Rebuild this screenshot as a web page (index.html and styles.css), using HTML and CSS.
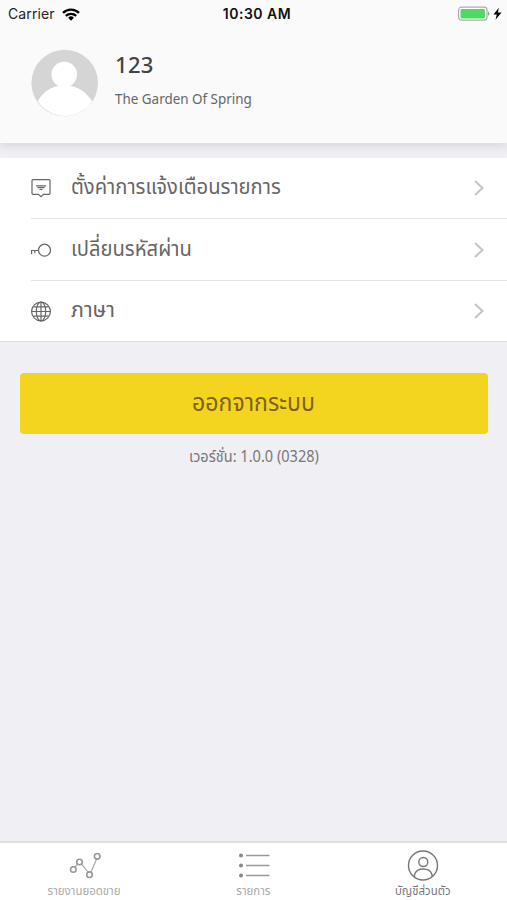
FILE: index.html
```
<!DOCTYPE html>
<html lang="th">
<head>
<meta charset="utf-8">
<title>บัญชีส่วนตัว</title>
<link rel="stylesheet" href="styles.css">
</head>
<body>
<div class="screen">
  <header class="header">
    <div class="status">
      <div class="carrier"><span>Carrier</span>
        <svg width="18" height="13" viewBox="0 0 18 13"><g fill="none" stroke="#000" stroke-width="2.3"><path d="M1 4.8a11.5 11.5 0 0 1 16 0"/><path d="M3.8 7.9a7.5 7.5 0 0 1 10.4 0"/></g><path d="M9 12.7l-2.9-3a4.2 4.2 0 0 1 5.800 0z"/></svg>
      </div>
      <div class="time">10:30 AM</div>
      <div class="power">
        <svg width="45" height="16" viewBox="0 0 45 16"><rect x=".6" y="1.200" width="28.400" height="13" rx="3" fill="#fff" stroke="#aaa" stroke-width="1.200"/><rect x="2.500" y="3" width="24.400" height="9.400" rx="1" fill="#4cd964"/><path d="M30 5.500q2.800 2.200 0 4.400z" fill="#999"/><path d="M40.800 1.800L35.500 8.500h3.300L37.500 13.800l6-7.300h-3.600z"/></svg>
      </div>
    </div>
    <div class="profile">
      <svg class="avatar" width="68" height="68" viewBox="0 0 68 68"><defs><clipPath id="face"><circle cx="34" cy="34" r="33"/></clipPath></defs><circle cx="33.700" cy="34" r="33.300" fill="#d5d5d5"/><g clip-path="url(#face)" fill="#fff"><circle cx="33.300" cy="25.500" r="12.800"/><path d="M27.500 34h11.500v6H27.500z"/><path d="M4 58C10 42 22 36.500 33.500 36.500S57 42 64 58V70H4z"/></g></svg>
      <div>
        <div class="name">123</div>
        <div class="shop"><span class="fit">The Garden Of Spring</span></div>
      </div>
    </div>
  </header>
  <main class="content">
    <nav class="menu">
      <a class="row">
        <svg class="icon" width="20" height="22" viewBox="0 0 20 22"><path d="M2 2.600h16a1 1 0 0 1 1 1v12.700a1 1 0 0 1-1 1h-5.500L10 19.600l-2.500-2.300H2a1 1 0 0 1-1-1V3.600a1 1 0 0 1 1-1zM5 8.800h10M6.500 10.700h7M8.500 12.500h3"/></svg>
        <span class="label"><span class="fit notify">ตั้งค่าการแจ้งเตือนรายการ</span></span>
        <svg class="chevron" width="12" height="18" viewBox="0 0 12 18"><path d="M2 2l7.500 7L2 16"/></svg>
      </a>
      <a class="row">
        <svg class="icon" width="20" height="22" viewBox="0 0 20 22"><circle cx="13.500" cy="11.200" r="6"/><path d="M7.500 11.500H.6v3.800M3.800 11.500v2.800"/></svg>
        <span class="label"><span class="fit password">เปลี่ยนรหัสผ่าน</span></span>
        <svg class="chevron" width="12" height="18" viewBox="0 0 12 18"><path d="M2 2l7.500 7L2 16"/></svg>
      </a>
      <a class="row">
        <svg class="icon" width="20" height="22" viewBox="0 0 20 22"><circle cx="10" cy="11.500" r="9.400"/><ellipse cx="10" cy="11.500" rx="4.700" ry="9.400"/><path d="M10 2.100v18.800M.6 11.500h18.800M2.300 6.800h15.400M2.300 16.200h15.400"/></svg>
        <span class="label"><span class="fit language">ภาษา</span></span>
        <svg class="chevron" width="12" height="18" viewBox="0 0 12 18"><path d="M2 2l7.500 7L2 16"/></svg>
      </a>
    </nav>
    <button class="logout"><span class="fit">ออกจากระบบ</span></button>
    <p class="version"><span class="fit">เวอร์ชั่น: 1.0.0 (0328)</span></p>
  </main>
  <footer class="tabs">
    <a class="tab">
      <svg width="34" height="30" viewBox="0 0 34 30"><g fill="none" stroke="#aaa" stroke-width="1.200"><path d="M6.800 16.500l3-3.500M13.500 12.800l6.800 8.700M23 21l6-13.800"/><g stroke="#999" stroke-width="1.600"><circle cx="5.300" cy="18.500" r="2.800"/><circle cx="11.500" cy="11" r="2.800"/><circle cx="21.500" cy="23.700" r="2.800"/><circle cx="29.200" cy="5.300" r="2.800"/></g></g></svg>
      <span class="caption"><span class="fit sales">รายงานยอดขาย</span></span>
    </a>
    <a class="tab">
      <svg width="34" height="30" viewBox="0 0 34 30"><g stroke="#999" stroke-width="1.600"><path d="M9 4.500H32.500M9 14.500H32.500M9 24.500H32.500"/></g><g fill="#888"><circle cx="4" cy="4.500" r="2"/><circle cx="4" cy="14.500" r="2"/><circle cx="4" cy="24.500" r="2"/></g></svg>
      <span class="caption"><span class="fit list">รายการ</span></span>
    </a>
    <a class="tab active">
      <svg width="34" height="30" viewBox="0 0 34 30"><g fill="none" stroke="#777" stroke-width="1.400"><circle cx="17" cy="14.500" r="14.500"/><circle cx="17.300" cy="11" r="4.500"/><path d="M8.500 26v-2.500C10 19.500 13.500 18 17.300 18s7.500 1.500 8.700 5.500V26"/></g></svg>
      <span class="caption"><span class="fit account">บัญชีส่วนตัว</span></span>
    </a>
  </footer>
</div>
</body>
</html>
```
FILE: styles.css
```
* { box-sizing: border-box; }
body { margin: 0; font-family: "Noto Sans Thai", "Open Sans", "Noto Sans", sans-serif; }
.screen { width: 507px; height: 900px; display: flex; flex-direction: column; background: #efeff4; overflow: hidden; }
.header { height: 143px; background: #fafafa; box-shadow: 0 3px 9px rgba(0,0,0,.1); }
.status { height: 28px; padding: 0 4px 0 8px; display: grid; grid-template-columns: 1fr auto 1fr; align-items: center; font: 14px/28px Inter, sans-serif; color: #222; letter-spacing: .1px; }
.carrier { display: flex; align-items: center; gap: 7px; }
.time { font-weight: 600; color: #111; font-size: 14px; letter-spacing: .5px; padding-left: 3px; }
.power { display: flex; justify-content: flex-end; }
.profile { display: flex; padding: 21px 0 0 31px; gap: 16px; }
.name { font: 500 22px/32px "Noto Sans", sans-serif; color: #444; letter-spacing: .3px; transform: translateY(-1px); }
.shop { font: 15px/34px "Noto Sans", sans-serif; color: #666; }
.shop .fit { transform: scaleX(.895); }
.fit { display: inline-block; white-space: nowrap; transform-origin: left center; }
.menu { margin-top: 15px; background: #fff; border-bottom: 1px solid #dedee2; padding-left: 31px; }
.row { height: 61px; display: flex; align-items: center; padding-right: 22px; border-bottom: 1px solid #e4e4e6; }
.row:nth-child(2) { height: 62px; }
.row:last-child { height: 60px; border-bottom: 0; }
.icon { fill: none; stroke: #666; stroke-width: 1.2; flex: none; }
.label { flex: 1; margin-left: 20px; font-size: 20px; line-height: 40px; color: #666; }
.label .fit { transform: translateY(-1px) scale(1.01, 1.1); }
.label .language { transform: translateY(-1px) scale(1.07, 1.1); }
.chevron { fill: none; stroke: #c5c5c8; stroke-width: 2; }
.content { flex: 1; }
.logout { display: block; width: 468px; height: 61px; margin: 31px 0 0 20px; padding: 0; border: 0; border-radius: 4px; background: #f3d520; color: #80611c; font: 400 22px/40px "Noto Sans Thai", "Open Sans", sans-serif; }
.version { margin: 9px 0 0; text-align: center; font-size: 15px; line-height: 30px; color: #777; }
.version .fit, .logout .fit, .caption .fit { transform-origin: center; }
.logout .fit { transform: scale(1.05, 1.1); }
.version .fit { transform: scale(.97, 1.06); }
.tabs { height: 59px; background: #fff; border-top: 2px solid #dedee3; display: grid; grid-template-columns: repeat(3, 1fr); }
.tab { display: flex; flex-direction: column; align-items: center; padding-top: 8px; color: #aaa; }
.tab svg { overflow: visible; }
.caption { font-size: 11px; line-height: 20px; }
.caption .fit { transform: translateY(1px) scale(1.04, 1.1); }
.active { color: #777; }
```
